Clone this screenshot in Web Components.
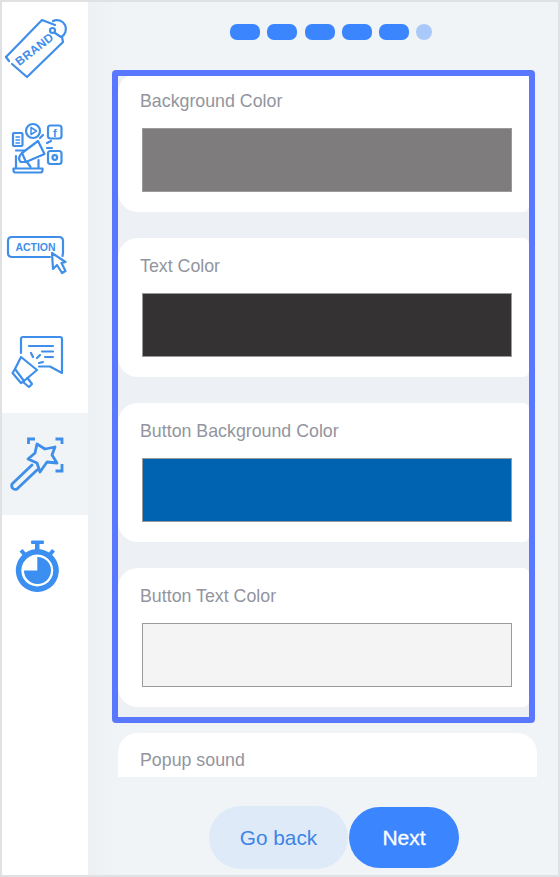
<!DOCTYPE html>
<html>
<head>
<meta charset="utf-8">
<style>
  html, body { margin:0; padding:0; }
  body { font-family:"Liberation Sans", Arial, sans-serif; }
</style>
</head>
<body>
<wizard-frame>
  <side-nav slot="nav"></side-nav>
  <step-dots total="6" done="5"></step-dots>
  <form-scroller>
    <tour-highlight>
      <color-field label="Background Color" color="#7e7c7c" style="margin-top:-3px"></color-field>
      <color-field label="Text Color" color="#353233"></color-field>
      <color-field label="Button Background Color" color="#0063b1"></color-field>
      <color-field label="Button Text Color" color="#f4f4f4"></color-field>
    </tour-highlight>
    <sound-field label="Popup sound"></sound-field>
  </form-scroller>
  <wizard-actions>
    <pill-button kind="light">Go back</pill-button>
    <pill-button kind="solid">Next</pill-button>
  </wizard-actions>
</wizard-frame>

<script>
class WizardFrame extends HTMLElement {
  connectedCallback() {
    this.attachShadow({mode:'open'}).innerHTML = `
      <style>
        :host { display:flex; box-sizing:border-box; width:560px; height:877px; border:2px solid #dfe1e3; background:#fff; overflow:hidden; }
        .main { flex:1; min-width:0; display:flex; flex-direction:column; background:linear-gradient(90deg,#edf1f3 0,#f0f4f7 36px); }
      </style>
      <slot name="nav"></slot>
      <div class="main"><slot></slot></div>
    `;
  }
}

const NAV_ICONS = [
  // brand tag
  `<g fill="none" stroke="#3f8fea" stroke-width="2.200" stroke-linejoin="round" stroke-linecap="round">
     <path d="M6 57 L42 20 L55 25"/>
     <path d="M62 37 L63 42 L27 77 L12 64"/>
     <path d="M6 57 L9 61"/>
     <circle cx="52.500" cy="30.500" r="2.500"/>
     <path d="M53 21 A8.500 8.500 0 1 1 61 37 L55 33"/>
   </g>
   <text x="0" y="0" transform="translate(37 52.500) rotate(-38)" text-anchor="middle" font-family="Liberation Sans" font-weight="700" font-size="12" letter-spacing=".3" fill="#3f8fea">BRAND</text>`,
  // social media
  `<g fill="none" stroke="#3f8fea" stroke-width="2.200" stroke-linejoin="round" stroke-linecap="round">
     <rect x="13" y="133" width="9.500" height="13" rx="1"/>
     <path d="M16 137h3.500M16 140h3.500M16 143h3.500" stroke-width="1.500"/>
     <circle cx="33" cy="131" r="7"/>
     <path d="M31 127.500 L36.500 131 L31 134.500 Z" stroke-width="1.500"/>
     <rect x="48" y="125.500" width="13.500" height="13" rx="2.500"/>
     <rect x="48" y="151" width="13.500" height="13" rx="2.500"/>
     <circle cx="54.800" cy="157.500" r="2.300"/>
     <path d="M16 156 V168 M38.500 160 V168 M16 150.500 H26"/>
     <path d="M13.500 168.500 H42.500 V170.500 Q42.500 172.500 40 172.500 H16 Q13.500 172.500 13.500 170.500 Z"/>
     <path d="M22 153 L38 141 L44.500 154 L26 162 Z" fill="#fff"/>
     <path d="M22 153 Q17 158 20.500 162 L26 162"/>
     <path d="M27 162 L30.500 167"/>
     <path d="M40 138 L43 135 M47 143 L51 141 M47 148 L52 148"/>
   </g>
   <text x="54.800" y="136.500" text-anchor="middle" font-family="Liberation Sans" font-weight="700" font-size="11" fill="#3f8fea">f</text>`,
  // action button with cursor
  `<g fill="none" stroke="#3f8fea" stroke-width="2.200" stroke-linejoin="round" stroke-linecap="round">
     <path d="M50 257 H12 Q8 257 8 253 V241 Q8 237 12 237 H59 Q63 237 63 241 V253 L62.500 256"/>
     <path d="M52 253 L53 269 L57 265 L62 273 L65.500 271 L61.500 263 L65.500 262 Z" fill="#fff"/>
   </g>
   <text x="35.500" y="251" text-anchor="middle" font-family="Liberation Sans" font-weight="700" font-size="10.500" fill="#3f8fea">ACTION</text>`,
  // speech bubble with megaphone
  `<g fill="none" stroke="#3f8fea" stroke-width="2.200" stroke-linejoin="round" stroke-linecap="round">
     <path d="M21 353 V339 Q21 337 23 337 H60 Q62 337 62 339 V373 L50 366.500 H39"/>
     <path d="M29 346 H53 M42 351.500 H53 M45 357 H53"/>
     <path d="M21 357 L37 370 L24 381 L15 369 Z" fill="#fff"/>
     <path d="M15 369 L12.500 373 L21 383 L24 381"/>
     <path d="M23 382 L29 387 L32 384 L27.500 378"/>
     <path d="M31 353 L33 357 M37 358 L40 355 M39 363 L43 362"/>
   </g>`,
  // magic wand
  `<g fill="none" stroke="#3f8fea" stroke-width="2.800" stroke-linejoin="round" stroke-linecap="round">
     <path d="M28.500 444 V439 H35 M55.500 439 H62 V444 M62 464 V471 H55.500" stroke-linecap="butt" stroke-linejoin="miter"/>
     <path d="M37 444 L45 449 L55 447 L52 455 L57 463 L47 462 L40 472 L37 463 L28 459 L35 453 Z"/>
     <path d="M32 465 L12 484 Q11 487 13 488.500 Q15 490 17 489 L37 470"/>
   </g>`,
  // stopwatch
  `<g fill="#3b8ff0">
     <rect x="31" y="540.500" width="13" height="3.500" rx="1"/>
     <rect x="35" y="543" width="4.500" height="7"/>
     <path d="M19.500 551.500 L22.500 549 L26 553 L23 555.500 Z M55 551.500 L52 549 L48.500 553 L51.500 555.500 Z"/>
     <path fill-rule="evenodd" d="M37.300 549 a21.500 21.500 0 1 0 .01 0 Z M37.300 554.500 a16 16 0 1 1 -.01 0 Z"/>
     <path d="M37.300 557 A13.500 13.500 0 1 1 24 570.500 H37.300 Z"/>
   </g>`
];

class SideNav extends HTMLElement {
  connectedCallback() {
    const items = NAV_ICONS.map((svg, i) => {
      const top = 5 + i * 102;
      return `<div class="item ${i == 4 ? 'on' : ''}"><svg width="86" height="102" viewBox="2 ${top} 86 102">${svg}</svg></div>`;
    }).join('');
    this.attachShadow({mode:'open'}).innerHTML = `
      <style>
        :host { display:block; flex:none; width:86px; padding-top:3px; background:#fff; box-sizing:border-box; }
        .item { height:102px; }
        .item.on { background:#f0f4f7; }
        svg { display:block; }
      </style>
      ${items}
    `;
  }
}

class StepDots extends HTMLElement {
  connectedCallback() {
    const total = +this.getAttribute('total');
    const done = +this.getAttribute('done');
    let dots = '';
    for (let i = 0; i < total; ++i) dots += `<span class="${i < done ? 'bar' : 'dot'}"></span>`;
    this.attachShadow({mode:'open'}).innerHTML = `
      <style>
        :host { display:flex; align-items:center; gap:7.300px; flex:none; height:16px; margin-top:22px; margin-bottom:30px; padding-left:142px; }
        .bar { width:30px; height:16px; border-radius:7px; background:#3b86ff; }
        .dot { width:16px; height:16px; border-radius:50%; background:#a9c9fb; }
      </style>
      ${dots}
    `;
  }
}

class FormScroller extends HTMLElement {
  connectedCallback() {
    this.attachShadow({mode:'open'}).innerHTML = `
      <style>
        :host { display:block; flex:none; height:707px; margin-left:24px; overflow:hidden; }
      </style>
      <slot></slot>
    `;
  }
}

class TourHighlight extends HTMLElement {
  connectedCallback() {
    this.attachShadow({mode:'open'}).innerHTML = `
      <style>
        :host { display:flex; flex-direction:column; gap:26px; box-sizing:border-box; width:423px; height:653px; border:6px solid #5a78ff; border-radius:4px; overflow:hidden; background:#edf1f5; }
      </style>
      <slot></slot>
    `;
  }
}

class ColorField extends HTMLElement {
  connectedCallback() {
    const color = this.getAttribute('color');
    this.attachShadow({mode:'open'}).innerHTML = `
      <style>
        :host { display:block; flex:none; box-sizing:border-box; height:139px; background:#fff; border-radius:20px 6px 6px 20px; padding-top:18px; }
        .label { height:20px; line-height:20px; padding-left:22px; font-size:17.800px; color:#92959e; }
        .swatch { box-sizing:border-box; width:370px; height:64px; margin:17px 0 0 24px; border:1px solid #9a9a9a; background:${color}; }
      </style>
      <div class="label">${this.getAttribute('label')}</div>
      <div class="swatch"></div>
    `;
  }
}

class SoundField extends HTMLElement {
  connectedCallback() {
    this.attachShadow({mode:'open'}).innerHTML = `
      <style>
        :host { display:block; box-sizing:border-box; width:419px; height:139px; margin:10px 0 0 6px; background:#fff; border-radius:20px; padding-top:17px; }
        .label { height:20px; line-height:20px; padding-left:22px; font-size:17.800px; color:#92959e; }
      </style>
      <div class="label">${this.getAttribute('label')}</div>
    `;
  }
}

class WizardActions extends HTMLElement {
  connectedCallback() {
    this.attachShadow({mode:'open'}).innerHTML = `
      <style>
        :host { display:flex; align-items:center; gap:1px; padding:29px 0 0 121px; }
      </style>
      <slot></slot>
    `;
  }
}

class PillButton extends HTMLElement {
  connectedCallback() {
    const light = this.getAttribute('kind') == 'light';
    this.attachShadow({mode:'open'}).innerHTML = `
      <style>
        :host { display:flex; align-items:center; justify-content:center; box-sizing:border-box; font-size:${light ? 20.8 : 21}px; padding-top:1px;
          width:${light ? 139 : 110}px; height:${light ? 63 : 61}px; border-radius:32px;
          background:${light ? '#deeaf8' : '#3b86ff'}; color:${light ? '#3f84e5' : '#fff'};
          -webkit-text-stroke:${light ? 0 : .3}px currentColor; }
      </style>
      <slot></slot>
    `;
  }
}

customElements.define('wizard-frame', WizardFrame);
customElements.define('side-nav', SideNav);
customElements.define('step-dots', StepDots);
customElements.define('form-scroller', FormScroller);
customElements.define('tour-highlight', TourHighlight);
customElements.define('color-field', ColorField);
customElements.define('sound-field', SoundField);
customElements.define('wizard-actions', WizardActions);
customElements.define('pill-button', PillButton);
</script>
</body>
</html>
